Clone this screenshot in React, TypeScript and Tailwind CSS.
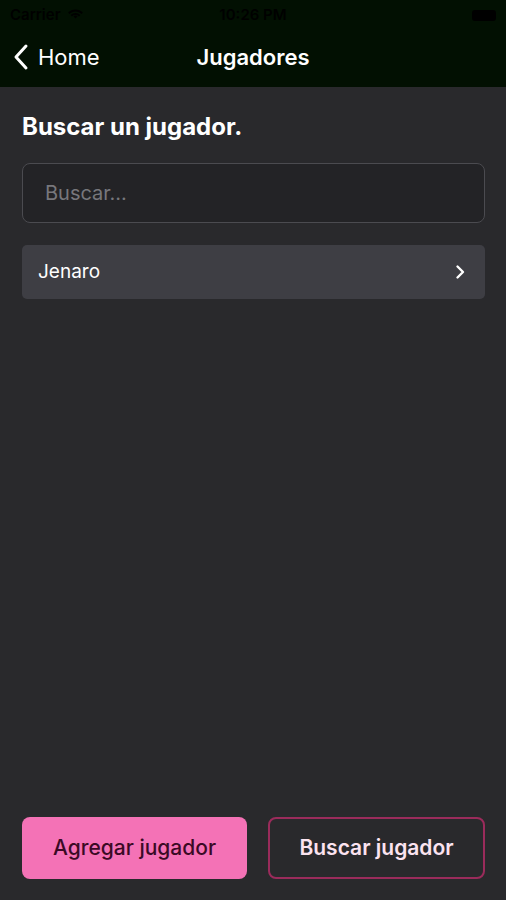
export default function App() {
  return (
    <div
      className="w-[506px] h-[900px] flex flex-col bg-[#29292c] text-white overflow-hidden"
      style={{ fontFamily: 'Inter, "Noto Sans", sans-serif' }}
    >
      {/* Header */}
      <header className="bg-[#021002] h-[87px] flex flex-col shrink-0">
        <div className="h-[30px] flex items-center justify-between px-[10px] text-[15px] font-semibold text-black">
          <div className="flex items-center gap-[6px] w-[140px]">
            <span>Carrier</span>
            <svg width="17" height="12" viewBox="0 0 17 12" fill="black">
              <path d="M8.5 2.5c2.3 0 4.4.9 6 2.4l1.3-1.3C13.9 1.7 11.3.6 8.5.6S3.1 1.7 1.2 3.6l1.3 1.3c1.6-1.5 3.7-2.4 6-2.4z" />
              <path d="M8.5 6c1.4 0 2.6.5 3.5 1.4l1.3-1.3C12 4.9 10.3 4.1 8.5 4.1S5 4.9 3.7 6.1L5 7.4C5.9 6.5 7.1 6 8.5 6z" />
              <path d="M8.5 9.4l2-2c-.5-.5-1.2-.8-2-.8s-1.5.3-2 .8l2 2z" />
            </svg>
          </div>
          <span>10:26 PM</span>
          <div className="w-[140px] flex justify-end">
            <div className="w-[24px] h-[11px] rounded-[3px] bg-black" />
          </div>
        </div>
        <div className="flex-1 relative flex items-center justify-center pb-[4px]">
          <div className="absolute left-[12px] top-0 bottom-[4px] flex items-center gap-[8px]">
            <svg width="18" height="28" viewBox="0 0 18 28" fill="none" stroke="white" strokeWidth="3" strokeLinecap="round" strokeLinejoin="round">
              <path d="M14 3L4 14l10 11" />
            </svg>
            <span className="text-[22px] leading-none">Home</span>
          </div>
          <h1 className="text-[22px] font-semibold leading-none">Jugadores</h1>
        </div>
      </header>

      {/* Body */}
      <main className="flex-1 flex flex-col pl-[22px] pr-[21px] pb-[21px]">
        <h2 className="mt-[25px] text-[24px] font-bold leading-[30px]">Buscar un jugador.</h2>
        <input
          type="text"
          placeholder="Buscar..."
          className="mt-[21px] h-[60px] w-full rounded-[8px] border border-[#4b4b50] bg-[#232326] px-[22px] text-[20px] text-white placeholder:text-[#77777c] outline-none"
        />
        <div className="mt-[22px] h-[54px] rounded-[5px] bg-[#3e3e44] flex items-center justify-between pl-[16px] pr-[20px]">
          <span className="text-[19px]">Jenaro</span>
          <svg width="10" height="16" viewBox="0 0 10 16" fill="none" stroke="white" strokeWidth="2.4" strokeLinecap="round" strokeLinejoin="round">
            <path d="M2.5 2.5L8 8l-5.5 5.5" />
          </svg>
        </div>

        <div className="mt-auto flex gap-[21px]">
          <button className="w-[225px] h-[62px] rounded-[8px] bg-[#f472b6] text-[#3b0a25] text-[21px] font-medium">
            Agregar jugador
          </button>
          <button className="flex-1 h-[62px] rounded-[8px] border-2 border-[#9a2b5b] text-[#fbe3f0] text-[21px] font-semibold">
            Buscar jugador
          </button>
        </div>
      </main>
    </div>
  );
}
